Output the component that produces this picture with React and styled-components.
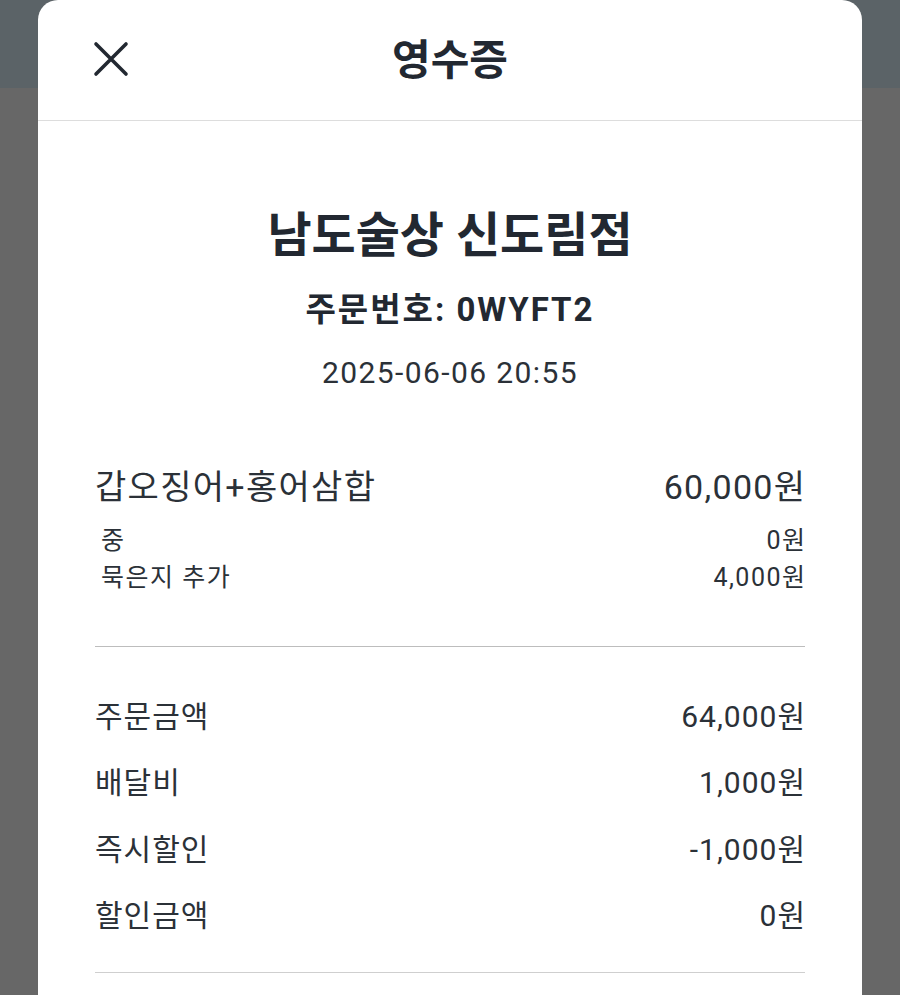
import styled, { createGlobalStyle } from 'styled-components'

const GlobalStyle = createGlobalStyle`
  body {
    margin: 0;
    background: #676767;
    font-family: Roboto, "Noto Sans CJK KR", sans-serif;
    color: #222831;
  }
`

const SScreen = styled.div`
  position: relative;
  min-height: 995px;
  overflow: hidden;
  display: flex;
  flex-direction: column;
`

const SAppBar = styled.div`
  height: 88px;
  background: #5b6367;
`

const SDim = styled.div`
  flex: 1;
  background: #676767;
`

const SSheet = styled.div`
  position: absolute;
  top: 0;
  left: 38px;
  right: 38px;
  bottom: 0;
  background: #ffffff;
  border-radius: 20px 20px 0 0;
  display: flex;
  flex-direction: column;
`

const SHeader = styled.div`
  height: 120px;
  border-bottom: 1px solid #dddddd;
  display: grid;
  grid-template-columns: 1fr auto 1fr;
  align-items: center;
  padding: 0 55px;
`

const SClose = styled.button`
  justify-self: start;
  width: 36px;
  height: 36px;
  padding: 0;
  border: 0;
  background: none;
  display: flex;
  color: #222831;
  margin-top: -2px;
`

const STitle = styled.div`
  font-size: 42px;
  font-weight: 700;
  line-height: 1;
  margin-top: 2px;
`

const SBody = styled.div`
  padding: 86px 57px 0;
  display: flex;
  flex-direction: column;
`

const SStore = styled.div`
  text-align: center;
  font-size: 48px;
  font-weight: 700;
  line-height: 57px;
`

const SOrderNo = styled.div`
  text-align: center;
  font-size: 33px;
  font-weight: 700;
  line-height: 40px;
  letter-spacing: 2px;
  margin-top: 26px;
`

const SDate = styled.div`
  text-align: center;
  font-size: 30px;
  line-height: 36px;
  letter-spacing: 1.4px;
  color: #2b3138;
  margin-top: 25px;
`

const SItem = styled.div`
  margin-top: 75px;
  padding-bottom: 50px;
  border-bottom: 1px solid #bdbdbd;
`

const SLine = styled.div`
  display: flex;
  justify-content: space-between;
  align-items: center;
  font-size: ${(p) => p.$size}px;
  line-height: ${(p) => p.$height}px;
  letter-spacing: ${(p) => p.$spacing}px;
  padding-left: ${(p) => p.$indent || 0}px;
  color: #2b3138;

  & > span:last-child {
    margin-right: -${(p) => p.$spacing}px;
  }
`

const SOptions = styled.div`
  margin-top: 14px;
`

const SSummary = styled.div`
  padding: 37px 0 23px;
  border-bottom: 1px solid #cfcfcf;
`

const CloseIcon = () => (
  <svg width="36" height="36" viewBox="0 0 36 36" fill="none">
    <path
      d="M3 3L33 33M33 3L3 33"
      stroke="currentColor"
      strokeWidth="3.6"
      strokeLinecap="round"
    />
  </svg>
)

const options = [
  { name: '중', price: '0원' },
  { name: '묵은지 추가', price: '4,000원' },
]

const summary = [
  { name: '주문금액', price: '64,000원' },
  { name: '배달비', price: '1,000원' },
  { name: '즉시할인', price: '-1,000원' },
  { name: '할인금액', price: '0원' },
]

const App = () => {
  return (
    <>
      <GlobalStyle />
      <SScreen>
        <SAppBar />
        <SDim />
        <SSheet>
          <SHeader>
            <SClose aria-label="닫기">
              <CloseIcon />
            </SClose>
            <STitle>영수증</STitle>
            <span />
          </SHeader>
          <SBody>
            <SStore>남도술상 신도림점</SStore>
            <SOrderNo>주문번호: 0WYFT2</SOrderNo>
            <SDate>2025-06-06 20:55</SDate>
            <SItem>
              <SLine $size={34} $height={42} $spacing={1.3}>
                <span>갑오징어+홍어삼합</span>
                <span>60,000원</span>
              </SLine>
              <SOptions>
                {options.map((o) => (
                  <SLine key={o.name} $size={25} $height={37} $spacing={1.5} $indent={6}>
                    <span>{o.name}</span>
                    <span>{o.price}</span>
                  </SLine>
                ))}
              </SOptions>
            </SItem>
            <SSummary>
              {summary.map((s) => (
                <SLine key={s.name} $size={30} $height={66.3} $spacing={1}>
                  <span>{s.name}</span>
                  <span>{s.price}</span>
                </SLine>
              ))}
            </SSummary>
          </SBody>
        </SSheet>
      </SScreen>
    </>
  )
}

export default App
